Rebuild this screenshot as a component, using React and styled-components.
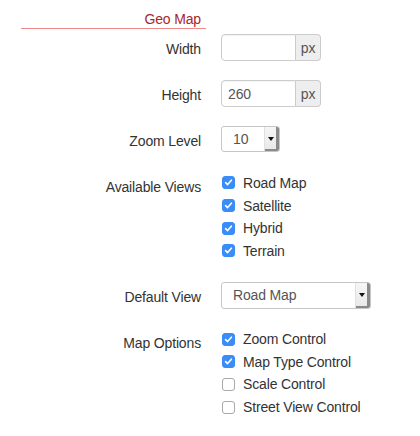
import React from "react";
import styled, { createGlobalStyle } from "styled-components";

const GlobalStyle = createGlobalStyle`
  body {
    margin: 0;
    background: #fff;
    font-family: "Liberation Sans", Helvetica, Arial, sans-serif;
    font-size: 14px;
    letter-spacing: -0.15px;
    color: #333;
  }
`;

const Page = styled.div`
  width: 420px;
  height: 436px;
  display: flex;
  flex-direction: column;
`;

const Legend = styled.div`
  margin-left: 21px;
  width: 180px;
  padding: 11px 5px 0 0;
  line-height: 17px;
  text-align: right;
  color: #a8262a;
  border-bottom: 1px solid #ee8a8a;
`;

const Form = styled.div`
  margin-top: 5px;
  display: flex;
  flex-direction: column;
  gap: 19.2px;
`;

const Row = styled.div`
  display: grid;
  grid-template-columns: 201px auto;
  column-gap: 20px;
  align-items: start;
`;

const Label = styled.div`
  text-align: right;
  line-height: 20px;
  padding-top: 5px;
`;

const InputGroup = styled.div`
  display: flex;
  width: 100px;
  height: 27px;
`;

const TextInput = styled.div`
  box-sizing: border-box;
  width: 75px;
  height: 27px;
  padding: 0 6px;
  display: flex;
  align-items: center;
  color: #555;
  border: 1px solid #ccc;
  border-radius: 4px 0 0 4px;
  box-shadow: inset 0 1px 1px rgba(0, 0, 0, 0.05);
`;

const Addon = styled.div`
  box-sizing: border-box;
  width: 25px;
  height: 27px;
  display: flex;
  align-items: center;
  justify-content: center;
  color: #555;
  background: #eee;
  border: 1px solid #ccc;
  border-left: none;
  border-radius: 0 4px 4px 0;
`;

const Select = styled.div`
  box-sizing: border-box;
  width: ${(p) => p.$width}px;
  height: ${(p) => p.$height}px;
  display: flex;
  align-items: stretch;
  border: 1px solid #c6c6c6;
  border-radius: 3px;
  background: #fff;
  overflow: hidden;
`;

const SelectValue = styled.div`
  flex: 1;
  display: flex;
  align-items: center;
  padding-left: 11px;
  color: #555;
`;

const SelectArrow = styled.div`
  width: 14px;
  display: flex;
  align-items: center;
  justify-content: center;
  background: linear-gradient(#f6f6f6, #e8e8e8);
  border-left: 1px solid #e0e0e0;
  box-shadow: inset -3px -2px 0 #8a8a8a;

  &::after {
    content: "";
    margin-right: 3px;
    border-left: 3px solid transparent;
    border-right: 3px solid transparent;
    border-top: 4px solid #111;
  }
`;

const CheckList = styled.div`
  display: flex;
  flex-direction: column;
`;

const CheckItem = styled.div`
  height: 22.7px;
  display: flex;
  align-items: center;
  gap: 8px;
  padding-left: 1px;
`;

const Box = styled.span`
  box-sizing: border-box;
  width: 13px;
  height: 13px;
  border-radius: 3px;
  display: flex;
  align-items: center;
  justify-content: center;
  background: ${(p) => (p.$checked ? "#3a8cf6" : "#fff")};
  border: 1px solid ${(p) => (p.$checked ? "#3a8cf6" : "#a9a9a9")};
`;

const Check = ({ checked, children }) => (
  <CheckItem>
    <Box $checked={checked}>
      {checked && (
        <svg width="9" height="9" viewBox="0 0 9 9">
          <path
            d="M1.6 4.6 L3.6 6.6 L7.4 2.2"
            fill="none"
            stroke="#fff"
            strokeWidth="1.6"
            strokeLinecap="round"
            strokeLinejoin="round"
          />
        </svg>
      )}
    </Box>
    {children}
  </CheckItem>
);

const views = [
  ["Road Map", true],
  ["Satellite", true],
  ["Hybrid", true],
  ["Terrain", true],
];

const options = [
  ["Zoom Control", true],
  ["Map Type Control", true],
  ["Scale Control", false],
  ["Street View Control", false],
];

const App = () => (
  <Page>
    <GlobalStyle />
    <Legend>Geo Map</Legend>
    <Form>
      <Row>
        <Label>Width</Label>
        <InputGroup>
          <TextInput />
          <Addon>px</Addon>
        </InputGroup>
      </Row>
      <Row>
        <Label>Height</Label>
        <InputGroup>
          <TextInput>260</TextInput>
          <Addon>px</Addon>
        </InputGroup>
      </Row>
      <Row>
        <Label>Zoom Level</Label>
        <Select $width={59} $height={26}>
          <SelectValue>10</SelectValue>
          <SelectArrow />
        </Select>
      </Row>
      <Row>
        <Label>Available Views</Label>
        <CheckList>
          {views.map(([name, on]) => (
            <Check key={name} checked={on}>
              {name}
            </Check>
          ))}
        </CheckList>
      </Row>
      <Row>
        <Label>Default View</Label>
        <Select $width={150} $height={27}>
          <SelectValue>Road Map</SelectValue>
          <SelectArrow />
        </Select>
      </Row>
      <Row>
        <Label>Map Options</Label>
        <CheckList>
          {options.map(([name, on]) => (
            <Check key={name} checked={on}>
              {name}
            </Check>
          ))}
        </CheckList>
      </Row>
    </Form>
  </Page>
);

export default App;
